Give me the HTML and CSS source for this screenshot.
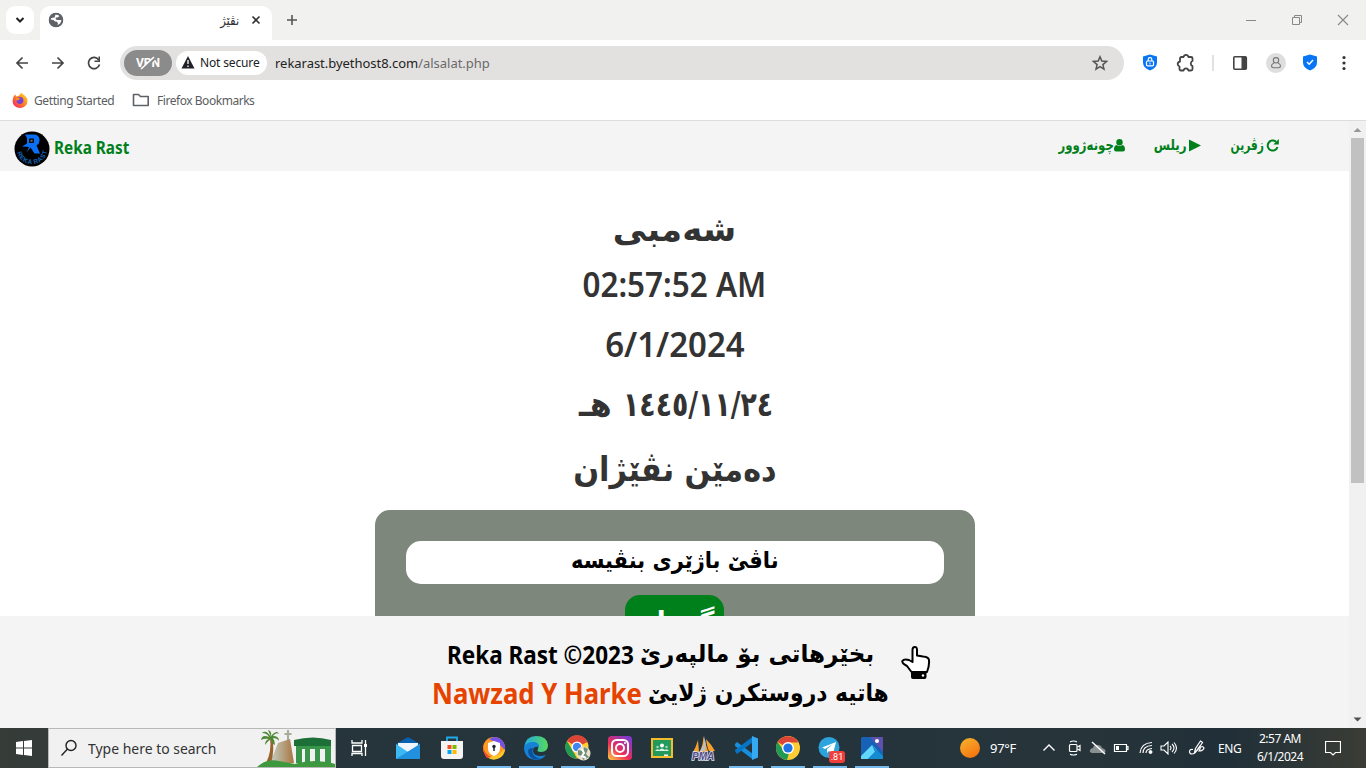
FILE: index.html
```
<!DOCTYPE html>
<html lang="ku">
<head>
<meta charset="utf-8">
<title>نڤێژ</title>
<link rel="stylesheet" href="styles.css">
</head>
<body>
<div class="screen">
  <header class="tabs">
    <div class="tab-list"><svg width="28" height="28" viewBox="0 0 28 28"><path d="M10.500 12l3.500 3.500 3.500-3.500" fill="none" stroke="#222" stroke-width="2"/></svg></div>
    <div class="tab">
      <svg width="16" height="16" viewBox="0 0 16 16"><circle cx="8" cy="8" r="7" fill="#5f6368"/><path d="M7.500 2.500q3 0 4 1.500L9.500 5.500H8L7.500 7 9 8h4.500q-.5 4-4 5l.5-2-1.500-1.500H7L5.500 8l-3-.5q.5-1 1-1.500l3-.5z" fill="#fff"/><circle cx="8" cy="8" r="6.500" fill="none" stroke="#5f6368" stroke-width="1.500"/></svg>
      <span class="tab-title" dir="rtl">نڤێژ</span>
      <svg class="x" width="10" height="10" viewBox="0 0 10 10"><path d="M1.500 1.500l7 7m0-7l-7 7" stroke="#333" stroke-width="1.600"/></svg>
    </div>
    <svg class="plus" width="12" height="12" viewBox="0 0 12 12"><path d="M6 1v10M1 6h10" stroke="#555" stroke-width="1.600"/></svg>
    <div class="window-buttons">
      <svg width="12" height="12"><path d="M1 6.500h10" stroke="#888"/></svg>
      <svg width="12" height="12" fill="none" stroke="#888"><path d="M1.500 3.500h7v7h-7zM3.500 3.500v-2h7v7h-2"/></svg>
      <svg width="12" height="12"><path d="M1 1l10 10M11 1L1 11" stroke="#888" stroke-width="1.100"/></svg>
    </div>
  </header>
  <div class="toolbar">
    <div class="nav-buttons">
      <svg width="16" height="16" viewBox="0 0 16 16"><path d="M14 8H3m5.500-5.500L3 8l5.500 5.500" fill="none" stroke="#444" stroke-width="1.700"/></svg>
      <svg width="16" height="16" viewBox="0 0 16 16"><path d="M2 8h11M7.500 2.500L13 8l-5.500 5.500" fill="none" stroke="#444" stroke-width="1.700"/></svg>
      <svg width="16" height="16" viewBox="0 0 16 16"><path d="M13.500 9.500A5.600 5.600 0 1 1 12.800 5" fill="none" stroke="#444" stroke-width="1.700"/><path d="M14 1.500V7H8.500V5.500h4v-4z" fill="#444"/></svg>
    </div>
    <div class="address">
      <div class="vpn"><span>VPN</span><svg width="24" height="14" viewBox="0 0 24 14"><path d="M7 13L20 1" stroke="#8b8b8b" stroke-width="3"/><path d="M5 13L18 1" stroke="#fff" stroke-width="1.600"/></svg></div>
      <div class="secure"><svg width="14" height="13" viewBox="0 0 14 13"><path d="M7 0l6.500 12.500H.5z" fill="#202124"/><path d="M7 4v4M7 9.500v1.500" stroke="#fff" stroke-width="1.300"/></svg><span>Not secure</span></div>
      <span class="url">rekarast.byethost8.com<i>/alsalat.php</i></span>
      <svg class="star" width="16" height="16" viewBox="0 0 16 16"><path d="M8 1.800l1.800 4.300 4.700.4-3.600 3.100 1.100 4.600L8 11.700l-4 2.500 1.100-4.600-3.600-3.100 4.700-.4z" fill="none" stroke="#555" stroke-width="1.500"/></svg>
    </div>
    <div class="extensions">
      <svg width="16" height="17" viewBox="0 0 16 17"><path d="M8 .5l7 2v6Q15 14 8 16.500 1 14 1 8.500v-6z" fill="#0875f5"/><rect x="4.500" y="7" width="7" height="4.800" rx="1" fill="none" stroke="#fff" stroke-width="1.200"/><path d="M6.200 7V5.500a1.800 1.800 0 0 1 3.600 0V7" fill="none" stroke="#fff" stroke-width="1.200"/><path d="M8 8.500v2" stroke="#fff"/></svg>
      <svg class="puzzle" width="20" height="20" viewBox="0 0 20 20"><path d="M5.500 4H7.500Q8 1.800 10 1.800T12.500 4H15q1.500 0 1.500 1.500V8q-1.700.5-1.700 2.500t1.700 2.500v3q0 1.500-1.500 1.500h-2.500Q12 15.300 10 15.300T7.500 17.500H5q-1.500 0-1.500-1.500v-2.500Q1.700 13 1.700 11T4 8.700V5.500Q4 4 5.500 4z" fill="none" stroke="#444" stroke-width="1.800" stroke-linejoin="round"/></svg>
      <span class="divider"></span>
      <svg width="16" height="16" viewBox="0 0 16 16"><rect x="1.800" y="1.800" width="12.500" height="12.500" rx="1" fill="none" stroke="#444" stroke-width="1.600"/><path d="M9.500 2h5v12h-5z" fill="#444"/></svg>
      <svg width="20" height="20" viewBox="0 0 20 20"><circle cx="10" cy="10" r="10" fill="#dedede"/><circle cx="10" cy="7.300" r="2.700" fill="none" stroke="#777" stroke-width="1.100"/><path d="M8 10q-2.500 1-2.500 3 0 1.700 2 1.700h5q2 0 2-1.700 0-2-2.500-3" fill="none" stroke="#777" stroke-width="1.100"/></svg>
      <svg width="16" height="17" viewBox="0 0 16 17"><path d="M8 .5l7 2v6Q15 14 8 16.500 1 14 1 8.500v-6z" fill="#0875f5"/><path d="M5 8l2.200 2.200L11 6" fill="none" stroke="#fff" stroke-width="1.500"/></svg>
      <svg width="4" height="16" fill="#333"><circle cx="2" cy="2.500" r="1.600"/><circle cx="2" cy="8" r="1.600"/><circle cx="2" cy="13.500" r="1.600"/></svg>
    </div>
  </div>
  <div class="bookmarks">
    <svg width="16" height="16" viewBox="0 0 16 16"><defs><linearGradient id="fox" x1="1" y1="0" x2="0" y2="1"><stop stop-color="#ffe226"/><stop offset=".45" stop-color="#ff8a1e"/><stop offset="1" stop-color="#f5156c"/></linearGradient></defs><path d="M9 .5l2 2q4.500 2 4.500 6.500A7.500 7 0 0 1 .5 9Q.5 5 3 2.500l1.500 2Q8 4 9 .5z" fill="url(#fox)"/><circle cx="8" cy="8.500" r="3.400" fill="#7542d8"/><path d="M3.500 6q3-1 5 1-2 .5-2.500 1.500L4 8z" fill="#ff8a1e"/></svg>
    <span class="bm-one">Getting Started</span>
    <svg class="folder" width="18" height="14" viewBox="0 0 18 14"><path d="M1.500 1.500h5l2 2h7.700v9H1.500z" fill="none" stroke="#5f6368" stroke-width="1.600" stroke-linejoin="round"/></svg>
    <span class="bm-two">Firefox Bookmarks</span>
  </div>
  <div class="viewport">
    <div class="page">
      <nav class="site-nav">
        <svg width="36" height="36" viewBox="0 0 36 36"><defs><path id="ring" d="M2.800 18a15.200 15.200 0 0 0 30.400 0"/></defs><circle cx="18" cy="18" r="17.500" fill="#000"/><path d="M11 3.500h8.500q6 0 6 5.500 0 4-3 5.500l3.500 8h-5.500l-4-6-4 5L15 16l-7-.5 5-3V7z" fill="#0a6ff5"/><path d="M15 7.500h5v4.500h-5z" fill="#111"/><path d="M16.500 9h2v1.500h-2z" fill="#777"/><text class="ring-text"><textPath href="#ring" startOffset="3.500">REKA RAST</textPath></text></svg>
        <strong class="brand">Reka Rast</strong>
        <div class="links" dir="rtl">
          <a class="l1"><svg width="13" height="13" viewBox="0 0 13 13"><path d="M11.500 8A5 5 0 1 1 10 2.800" fill="none" stroke="#00801b" stroke-width="2"/><path d="M12.800 0v5.500H7.300z" fill="#00801b"/></svg><span>زڤرین</span></a>
          <a class="l2"><svg width="12" height="13" viewBox="0 0 12 13"><path d="M0 .5l12 6-12 6z" fill="#00801b"/></svg><span>ریلس</span></a>
          <a class="l3"><svg width="11" height="13" viewBox="0 0 11 13"><circle cx="5.500" cy="3.300" r="3.200" fill="#00801b"/><path d="M2.500 6Q0 6.500 0 10.500 0 12.500 2 12.500h7q2 0 2-2Q11 6.500 8.500 6q-3 2-6 0z" fill="#00801b"/></svg><span>چونەژوور</span></a>
        </div>
      </nav>
      <main>
        <h1 class="day" dir="rtl"><span>شەمبی</span></h1>
        <h1 class="time"><span>02:57:52 AM</span></h1>
        <h1 class="date"><span>6/1/2024</span></h1>
        <h1 class="hijri"><span class="h">هـ</span><span class="n">١٤٤٥/١١/٢٤</span></h1>
        <h1 class="prayers" dir="rtl"><span>دەمێن نڤێژان</span></h1>
        <section class="card">
          <div class="city" dir="rtl"><span>ناڤێ باژێری بنڤیسە</span></div>
          <div class="search-button" dir="rtl">گەڕان</div>
        </section>
      </main>
      <footer>
        <div class="credits">
          <p class="c1"><span class="lat">Reka Rast ©2023</span><span class="ar" dir="rtl">بخێرهاتی بۆ مالپەرێ</span></p>
          <p class="c2"><span class="lat">Nawzad Y Harke</span><span class="ar" dir="rtl">هاتیە دروستکرن ژلایێ</span></p>
        </div>
        <svg class="hand" width="30" height="34" viewBox="0 0 30 34"><path d="M10.500 26L6 20Q1 17.500 1.300 15 3 12.500 8 14l3.500 2V4q0-3 2.300-3T16 4v5.500l6 1q6 .5 6 4 .5 5-2 11.500z" fill="#fff" stroke="#000" stroke-width="2" stroke-linejoin="round"/><path d="M10 26h15.500v5q0 2-2 2h-11.500q-2 0-2-2z"/><circle cx="22" cy="29.500" r="1.200" fill="#fff"/></svg>
      </footer>
    </div>
    <div class="scrollbar"><svg width="17" height="17"><path d="M4.500 11L8.500 7l4 4z" fill="#999"/></svg><div class="thumb"></div><svg class="down" width="17" height="17"><path d="M4.500 6.500h8l-4 4z" fill="#505050"/></svg></div>
  </div>
  <div class="taskbar">
    <div class="start"><svg width="16" height="16" viewBox="0 0 16 16" fill="#fff"><path d="M0 2l7-1v6.500H0zM8 .9L16 0v7.500H8zM0 8.500h7V15l-7-1zM8 8.500h8V16l-8-1z"/></svg></div>
    <div class="search"><svg width="18" height="18" viewBox="0 0 18 18"><circle cx="11" cy="6.500" r="5" fill="none" stroke="#222" stroke-width="1.400"/><path d="M7.500 10L1.500 16.500" stroke="#222" stroke-width="1.400"/></svg><span>Type here to search</span>
      <svg class="art" width="78" height="38" viewBox="0 0 78 38"><defs><linearGradient id="rock" x2="1"><stop stop-color="#c4d2c5"/><stop offset="1" stop-color="#a87543"/></linearGradient></defs><path d="M13 34l8-20 12-4 4 24z" fill="url(#rock)"/><path d="M31 1v10M27.500 5h7" stroke="#a8aa99" stroke-width="2"/><path d="M9 34q6-12 4-25l2-1q3 13-1 26z" fill="#9a632b"/><path d="M14 8Q9 0 5 4q5 0 7 4-7-3-8 3 4-2 8-1-4 1-4 6 3-4 6-6 0 4 4 6 0-4-2-7 4 0 6 3 0-5-6-5 3-4 6-2-2-5-8 2 1-5-3-6z" fill="#518a35"/><path d="M0 38q10-9 22-6l16 3q20-6 40 0v3z" fill="#3e993e"/><path d="M39 16h35v18h-6V20h-5v14h-5V20h-5v14h-5V20h-3v14h-6z" fill="#38954a"/><path d="M37 11q19-5 37 0v6H37z" fill="#1c6f37"/></svg>
    </div>
    <div class="apps">
      <div class="app view"><svg width="18" height="18" viewBox="0 0 18 18" fill="none" stroke="#fff" stroke-width="1.300"><path d="M1 1v3h10V1M1.500 6.500h9v6h-9zM1 17v-2.500h10V17M14.500 1v16"/><path d="M13 5h3v3h-3z" fill="#fff" stroke="none"/></svg></div>
      <div class="app mail"><svg width="26" height="24" viewBox="0 0 26 24"><path d="M1 8L13 1l12 7v4H1z" fill="#0962af"/><path d="M3 7h20v10H3z" fill="#eef6fc"/><path d="M1 8l12 8L25 8v15H1z" fill="#3cb9f3"/><path d="M1 23L25 8v15z" fill="#2090df"/></svg></div>
      <div class="app"><svg width="24" height="24" viewBox="0 0 24 24"><path d="M7 5V1.500h10V5" fill="none" stroke="#20a9eb" stroke-width="1.800"/><path d="M1 5h22v15q0 3-3 3H4q-3 0-3-3z" fill="#f4f4f4"/><path d="M7.500 9h4v4h-4z" fill="#f25022"/><path d="M12.500 9h4v4h-4z" fill="#7fba00"/><path d="M7.500 14h4v4h-4z" fill="#00a4ef"/><path d="M12.500 14h4v4h-4z" fill="#ffb900"/></svg></div>
      <div class="app on"><svg width="24" height="24" viewBox="0 0 24 24"><circle cx="12" cy="12" r="11" fill="#ff9b20"/><path d="M12 1a11 11 0 0 1 11 13L17 8 7 3z" fill="#7652e8"/><path d="M23 13A11 11 0 0 1 5 21l11-2z" fill="#ffc62c"/><path d="M1 9q1 10 9 12L5 22Q1 18 1 9z" fill="#f14932"/><path d="M12 5l6 2v5q0 6-6 8-6-2-6-8V7z" fill="#fff"/><circle cx="12" cy="10.500" r="1.700" fill="#223"/><path d="M12 10v5" stroke="#223" stroke-width="1.500"/></svg></div>
      <div class="app on"><svg width="26" height="24" viewBox="0 0 26 24"><defs><linearGradient id="edge" x2="1"><stop stop-color="#20a9e6"/><stop offset="1" stop-color="#58d95b"/></linearGradient></defs><path d="M1 11Q3 0 13 0q11 0 12 9 0 7-7 7-5 0-3-3 2-6-4-6-7 0-10 4z" fill="url(#edge)"/><path d="M1 11Q4 6 10 6q6 0 6 5-6-1-6 4 1 7 13 4-4 5-10 5Q1 23 1 11z" fill="#1681d5"/><path d="M10 12q-3 9 8 11-8 2-12-4-3-7 4-7z" fill="#0b509b"/></svg></div>
      <div class="app on"><svg width="26" height="26" viewBox="0 0 26 26"><circle cx="12" cy="12" r="11.500" fill="#fc3"/><path d="M12 12L2 6A11.500 11.500 0 0 1 22.500 7z" fill="#db4437"/><path d="M2 6l7 12 3 5.500A11.500 11.500 0 0 1 2 6z" fill="#229954"/><circle cx="12" cy="12" r="5.500" fill="#fff"/><circle cx="12" cy="12" r="4.200" fill="#4285f4"/><circle cx="18.500" cy="18.500" r="7" fill="#e9e1cb"/><path d="M13 15l5 1 1-4 4 2-2 5 3 3-6 3-1-4-4-1z" fill="#708d79"/><path d="M17 14l2 4-2 3 4 2" stroke="#fff" fill="none" stroke-width="2"/></svg></div>
      <div class="app"><svg width="24" height="24" viewBox="0 0 24 24"><defs><linearGradient id="insta" x1="0" y1="1" x2=".8" y2="0"><stop stop-color="#ffd33e"/><stop offset=".45" stop-color="#ee2c55"/><stop offset="1" stop-color="#7d39d1"/></linearGradient></defs><rect width="24" height="24" rx="3.500" fill="url(#insta)"/><rect x="4" y="4" width="16" height="16" rx="4.500" fill="none" stroke="#fff" stroke-width="2"/><circle cx="12" cy="12" r="4" fill="none" stroke="#fff" stroke-width="2"/><circle cx="17" cy="7" r="1" fill="#fff"/></svg></div>
      <div class="app"><svg width="24" height="24" viewBox="0 0 24 24"><path d="M1 2h22v20H1z" fill="#f3bd2c"/><path d="M3 4h18v16H3z" fill="#23995b"/><circle cx="12" cy="9.500" r="2" fill="#fff"/><circle cx="7.500" cy="11" r="1.300" fill="#9ed2b5"/><circle cx="16.500" cy="11" r="1.300" fill="#9ed2b5"/><path d="M5 15q2-3 4-1 3-3 6 0 2-2 4 1z" fill="#d8efdf"/><path d="M14 18.500h4v1.500h-4z" fill="#fff"/></svg></div>
      <div class="app"><svg width="26" height="25" viewBox="0 0 26 25"><path d="M2 16q3-5 5-12l1 12zM8 17Q13 8 12 0l5 15zM15 3q1 8 3 12h6q-4-7-9-12z" fill="#f6a12d"/><path d="M9 15Q14 8 13 0l2 8-1 7z" fill="#bdbdc6"/><text class="pma" x="1" y="23.500">PMA</text></svg></div>
      <div class="app on"><svg width="25" height="24" viewBox="0 0 25 24"><path d="M1 8l2-2 16 12v5.500L1 10z" fill="#168fde"/><path d="M1 15l2 3L19 6V.5L1 14z" fill="#0875c4"/><path d="M18 0l6 2.500v19L18 24z" fill="#35a9f2"/></svg></div>
      <div class="app on"><svg width="24" height="24" viewBox="0 0 24 24"><circle cx="12" cy="12" r="12" fill="#fc3"/><path d="M12 12L1.600 6A12 12 0 0 1 22.400 6.500H12z" fill="#db4437"/><path d="M1.600 6L8 15l5 2-2 7A12 12 0 0 1 1.600 6z" fill="#229954"/><circle cx="12" cy="12" r="6" fill="#fff"/><circle cx="12" cy="12" r="4.600" fill="#1e73e8"/></svg></div>
      <div class="app on"><svg width="24" height="24" viewBox="0 0 24 24"><circle cx="11" cy="11.500" r="10.500" fill="#2ba3dc"/><path d="M4 11.500L18 6l-3 12-4-3-2 2v-4l6-5-8 5z" fill="#fff"/></svg><span class="badge">.81</span></div>
      <div class="app on"><svg width="24" height="24" viewBox="0 0 24 24"><rect x="1" y="1" width="22" height="22" rx="1.500" fill="#1761b7"/><path d="M10 1h13v15z" fill="#5e51ad"/><path d="M1 20l11-11 5 5-9 9H1z" fill="#61d5fb"/><path d="M12 9l11 11v3H8l7-7z" fill="#158bd2"/><circle cx="17" cy="5" r="2" fill="#fff"/></svg></div>
    </div>
    <div class="tray">
      <span class="sun"></span><span class="temp">97°F</span>
      <svg class="chev" width="14" height="14"><path d="M1.500 9.500L7 4l5.500 5.500" fill="none" stroke="#fff" stroke-width="1.400"/></svg>
      <svg class="cam" width="14" height="16" viewBox="0 0 14 16" fill="none" stroke="#fff" stroke-width="1.200"><rect x="1.500" y="4.500" width="7.500" height="7" rx="1"/><path d="M9.500 7l2.500-1.500v5L9.500 9M2 2Q5.500 0 9 2M2 14.200q3.500 1.600 7 0"/></svg>
      <svg class="cloud" width="18" height="14" viewBox="0 0 18 14"><path d="M3 12Q0 11 1 9q1-2 3-2 1-4 5-3 3 0 4 3 4 1 3.500 4-1 1.500-3 1z" fill="#8a9193"/><path d="M3 1l13 12" stroke="#fff" stroke-width="1.400"/></svg>
      <svg class="battery" width="16" height="12"><path d="M1.500 2.500h12v7h-12zM14 4.500h1v3h-1" fill="none" stroke="#fff" stroke-width="1.200"/><path d="M3 4h3v4H3z" fill="#fff"/></svg>
      <svg class="wifi" width="14" height="14" viewBox="0 0 14 14" fill="none" stroke="#fff"><path d="M1 12Q2 2 13 1.500M4 12Q4 5 13 4.500M7 12q0-4 6-4.500" stroke-width="1.200"/><circle cx="11.500" cy="11" r="1.500" fill="#fff"/></svg>
      <svg class="sound" width="18" height="14" viewBox="0 0 18 14" fill="none" stroke="#fff" stroke-width="1.100"><path d="M1 5h3l4-4v12L4 9H1zM10 5q2 2 0 4M12 3q4 4 0 8M14 1.500q5 5.500 0 11"/></svg>
      <svg class="pen" width="18" height="16" viewBox="0 0 18 16" fill="none" stroke="#fff" stroke-width="1.200"><path d="M6.500 12.500l1-4 5-7.500 2 1.500-5 7.500zM5 9.500q-3.500-.5-3.500 2T4 14q3 0 5-4l3-4q1 2-1 5 4 0 5-3-1-2-3-1"/></svg>
      <span class="lang">ENG</span>
      <span class="clock"><b>2:57 AM</b><b>6/1/2024</b></span>
      <svg class="note" width="16" height="16"><path d="M.5 1.500h15v11h-5l-2.500 2.500-2.500-2.500h-5z" fill="none" stroke="#fff" stroke-width="1.200"/></svg>
    </div>
  </div>
</div>
</body>
</html>
```
FILE: styles.css
```
* { box-sizing: border-box; }
body { margin: 0; overflow: hidden; font-family: "Noto Sans", "DejaVu Sans", sans-serif; }
svg { display: block; flex: none; }
span { white-space: nowrap; }
h1, p { margin: 0; }
.screen { width: 1366px; height: 768px; display: flex; flex-direction: column; overflow: hidden; background: #fff; }

.tabs { height: 40px; background: #f1f1ef; display: flex; align-items: flex-start; padding: 6px 11px 0 6px; }
.tab-list { width: 28px; height: 28px; border-radius: 9px; background: #fff; }
.tab { width: 232px; height: 34px; margin-left: 6px; padding: 0 11px 6px 8px; background: #fff; border-radius: 10px 10px 0 0; display: flex; align-items: center; }
.tab-title { font: 13px "DejaVu Sans", sans-serif; margin-left: auto; margin-right: 12px; color: #333; transform: scaleX(.9); transform-origin: right; }
.plus { margin: 8px 0 0 14px; }
.window-buttons { margin: 8px 0 0 auto; display: flex; gap: 34px; padding-right: 6px; }

.toolbar { height: 45px; display: flex; align-items: center; padding-left: 14px; }
.nav-buttons { display: flex; gap: 20px; width: 106px; }
.address { width: 1004px; height: 34px; border-radius: 17px; background: #e3e1e0; display: flex; align-items: center; padding: 0 16px 0 4px; font-size: 13px; }
.vpn { width: 48px; height: 26px; border-radius: 13px; background: #8b8b8b; color: #fff; font: bold 12px Roboto, sans-serif; display: grid; place-content: center; place-items: center; }
.vpn > * { grid-area: 1 / 1; }
.secure { margin-left: 4px; width: 91px; height: 24px; border-radius: 12px; background: #fff; display: flex; align-items: center; gap: 5px; padding-left: 5px; font-size: 12px; letter-spacing: -.15px; color: #202124; }
.url { margin-left: 8px; color: #222; letter-spacing: -.03px; }
.url i { font-style: normal; color: #6a6a6a; }
.star { margin-left: auto; }
.extensions { display: flex; align-items: center; margin-left: 18px; }
.puzzle { margin-left: 18px; }
.divider { width: 2px; height: 16px; background: #e3e1e0; margin: 0 18px 0 16px; }
.divider + svg + svg { margin: 0 16px 0 18px; }
.extensions svg:last-child { margin-left: 24px; }

.bookmarks { height: 35px; display: flex; align-items: center; padding: 0 0 5px 12px; font-size: 12px; color: #5a5d61; }
.bm-one { margin-left: 6px; width: 80px; letter-spacing: -.4px; }
.folder { margin-left: 18px; }
.bm-two { margin-left: 7px; letter-spacing: -.46px; }

.viewport { height: 608px; display: flex; border-top: 1px solid #dcdcdc; }
.page { width: 1349px; display: flex; flex-direction: column; }
.site-nav { height: 50px; background: #f4f4f4; display: flex; align-items: center; padding: 6px 70px 0 14px; }
.ring-text { font: bold 6.500px "Liberation Sans", sans-serif; fill: #1266ba; letter-spacing: .5px; }
.brand { font-size: 18px; color: #00801b; margin: -4px 0 0 4px; transform: scaleX(.85); transform-origin: left; }
.links { margin-left: auto; display: flex; gap: 29px; font: bold 15px "DejaVu Sans", sans-serif; color: #00801b; margin-top: -8px; }
.links a { display: flex; align-items: center; gap: 2px; height: 20px; }
.links span { transform-origin: right; }
.l1 { width: 49px; } .l2 { width: 47px; } .l3 { width: 67px; }
.l1 span { transform: scaleX(.71); }
.l2 span { transform: scaleX(.79); }
.l3 span { transform: scaleX(.78); }
.links .l3 { gap: 0; }

main { height: 445px; overflow: hidden; display: flex; flex-direction: column; align-items: center; padding-top: 30px; color: #333; }
h1 { height: 60px; flex: none; font-size: 34px; line-height: 60px; font-weight: 600; display: flex; justify-content: center; }
.day, .hijri, .prayers { font-family: "DejaVu Sans", sans-serif; font-weight: bold; }
.day { height: 53px; line-height: 56px; }
.time span { transform: scaleX(.925); }
.date span { transform: scaleX(.97); }
.hijri { width: 192px; justify-content: flex-start; }
.hijri .h { width: 44px; flex: none; transform: scaleX(.93); transform-origin: left; }
.hijri .n { transform: scaleX(.787); transform-origin: left; }
.prayers { height: 76px; line-height: 70px; }
.prayers span { transform: scaleX(.893); }
.card { width: 600px; height: 200px; flex: none; background: #7d877c; border-radius: 15px; padding-top: 31px; display: flex; flex-direction: column; align-items: center; }
.city { width: 538px; height: 43px; flex: none; border-radius: 15px; background: #fff; color: #000; display: flex; align-items: center; justify-content: center; font: bold 23px "DejaVu Sans", sans-serif; padding-bottom: 5px; }
.city span { transform: scaleX(.913); }
.search-button { margin-top: 11px; width: 99px; height: 60px; border-radius: 15px; background: #00801b; color: #fff; text-align: center; font: bold 26px/52px "DejaVu Sans", sans-serif; }

footer { height: 112px; background: #f4f4f4; display: flex; padding-left: 432px; }
.credits { width: 457px; padding-top: 18px; font-weight: bold; color: #000; }
.credits p { display: flex; height: 39px; align-items: center; }
.credits .c1 { padding-left: 15px; }
.lat { transform-origin: left; flex: none; }
.ar { font: bold 24px "DejaVu Sans", sans-serif; transform-origin: left; flex: none; }
.c1 .lat { width: 193px; font-size: 25px; transform: scaleX(.9); }
.c2 .lat { width: 216px; font-size: 29px; color: #e64300; transform: scaleX(.886); }
.c1 .ar { transform: scaleX(.96); }
.c2 .ar { transform: scaleX(.91); }
.hand { margin: 30px 0 0 12px; }
.scrollbar { width: 17px; background: #f1f1f1; display: flex; flex-direction: column; align-items: center; }
.thumb { width: 13px; height: 345px; background: #c1c1c1; }
.down { margin-top: auto; }

.taskbar { height: 40px; background: linear-gradient(90deg, #363c38, #26343b 25%, #24343c 60%, #27343a 80%, #202f38 90%, #3b3d35); display: flex; color: #fff; }
.start { width: 48px; padding: 12px 16px; }
.search { width: 288px; border: 1px solid #b8b8b8; background: #f1f1f1; color: #333; display: flex; align-items: center; padding-left: 11px; font-size: 15px; }
.search span { margin-left: 10px; width: 128px; transform: scaleX(.93); transform-origin: left; }
.art { margin-left: auto; }
.apps { display: flex; padding-left: 3px; gap: 8px; }
.app { width: 34px; height: 40px; display: flex; align-items: center; justify-content: center; position: relative; }
.view { width: 42px; } .mail { width: 38px; }
.on { border-bottom: 2px solid #76b9ed; padding-top: 2px; }
.pma { font: italic bold 10px "Liberation Sans", sans-serif; fill: #4f4c86; stroke: #e5e5f2; stroke-width: 1.500px; paint-order: stroke; }
.badge { position: absolute; left: 16px; top: 23px; background: #f23e3b; border-radius: 3px; width: 16px; height: 12px; font: 9px/12px Roboto, sans-serif; text-align: center; }
.tray { margin-left: auto; display: flex; align-items: center; font-size: 12px; padding-right: 25px; }
.sun { width: 20px; height: 20px; border-radius: 50%; background: linear-gradient(150deg, #f7b52e, #f56b0c); }
.temp { margin-left: 10px; width: 28px; font-size: 13px; letter-spacing: -.3px; }
.chev { margin-left: 24px; } .cam { margin-left: 12px; } .cloud { margin-left: 7px; } .battery { margin-left: 6px; }
.wifi { margin-left: 10px; } .sound { margin-left: 7px; } .pen { margin-left: 10px; }
.lang { margin-left: 12px; width: 24px; letter-spacing: -.4px; }
.clock { width: 76px; text-align: center; }
.clock b { display: block; font-weight: normal; line-height: 18px; letter-spacing: -.5px; }
.note { margin-left: 7px; }
```
